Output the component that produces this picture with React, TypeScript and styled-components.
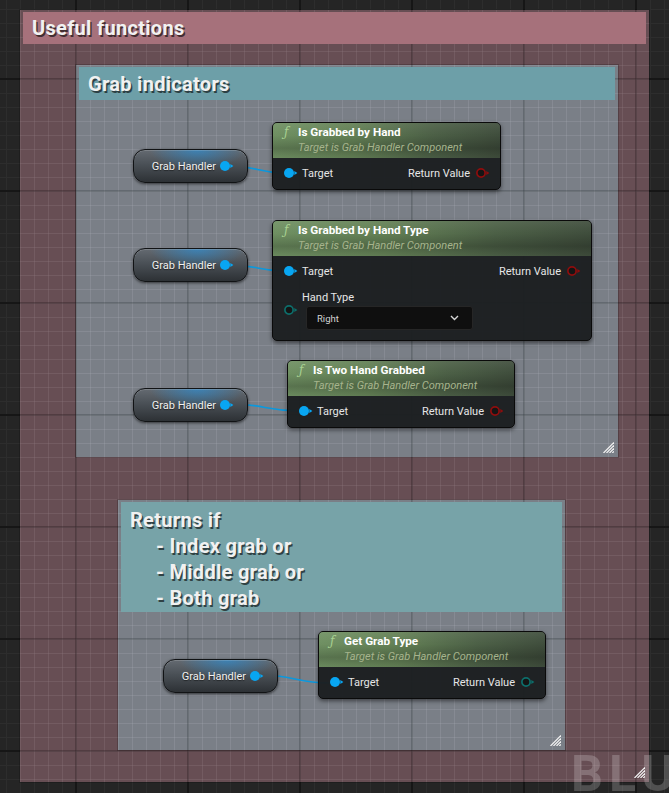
import React from "react";
import styled, { createGlobalStyle, css } from "styled-components";

const GlobalStyle = createGlobalStyle`
  html, body { margin: 0; padding: 0; background: #252525; }
  body { font-family: Roboto, "Noto Sans", sans-serif; }
`;

const gridLayer = (ox: number, oy: number, minor: string, major: string) => css`
  background-image:
    linear-gradient(to right, ${major} 2px, transparent 2px),
    linear-gradient(to bottom, ${major} 2px, transparent 2px),
    linear-gradient(to right, ${minor} 1.5px, transparent 1.5px),
    linear-gradient(to bottom, ${minor} 1.5px, transparent 1.5px);
  background-size: 112px 112px, 112px 112px, 14px 14px, 14px 14px;
  background-position: ${75 - ox}px 0, 0 ${78 - oy}px, ${6 - ox}px 0, 0 ${9 - oy}px;
`;

const Canvas = styled.div`
  position: relative;
  width: 669px;
  height: 793px;
  overflow: hidden;
  background-color: #252525;
  ${gridLayer(0, 0, "#2d2d2d", "#161616")}
`;

type Box = { $x: number; $y: number; $w: number; $h: number };

const Comment = styled.section<Box & { $tint: string; $minor: string; $major: string }>`
  position: absolute;
  left: ${(p) => p.$x}px;
  top: ${(p) => p.$y}px;
  width: ${(p) => p.$w}px;
  height: ${(p) => p.$h}px;
  box-sizing: border-box;
  padding: 2px 3px 0;
  display: flex;
  flex-direction: column;
  background-color: ${(p) => p.$tint};
  ${(p) => gridLayer(p.$x, p.$y, p.$minor, p.$major)}
  box-shadow: 0 0 0 1px rgba(0, 0, 0, 0.18);
`;

const CommentHeader = styled.div<{ $bg: string; $pad: string }>`
  background: ${(p) => p.$bg};
  color: #f1f1f1;
  font-family: Roboto, "Noto Sans", sans-serif;
  font-weight: 700;
  font-size: 20px;
  line-height: 26px;
  letter-spacing: 0.3px;
  padding: ${(p) => p.$pad};
  text-shadow: 1.5px 1.5px 0 rgba(0, 0, 0, 0.6);
  white-space: nowrap;
`;

const HeaderLine = styled.div<{ $indent?: boolean }>`
  padding-left: ${(p) => (p.$indent ? 26 : 0)}px;
`;

const Grip = styled.svg`
  position: absolute;
  right: 4px;
  bottom: 4px;
`;

const ResizeGrip = () => (
  <Grip width="11" height="11" viewBox="0 0 11 11">
    <g stroke="#f2f2f2" strokeWidth="1.2">
      <line x1="11" y1="0.5" x2="0.5" y2="11" />
      <line x1="11" y1="3.5" x2="3.5" y2="11" />
      <line x1="11" y1="6.5" x2="6.5" y2="11" />
      <line x1="11" y1="9.3" x2="9.3" y2="11" />
    </g>
  </Grip>
);

const Wires = styled.svg`
  position: absolute;
  left: 0;
  top: 0;
  pointer-events: none;
`;

const VarNode = styled.div<{ $x: number; $y: number }>`
  position: absolute;
  left: ${(p) => p.$x}px;
  top: ${(p) => p.$y}px;
  width: 115px;
  height: 34px;
  box-sizing: border-box;
  border-radius: 12px;
  border: 1px solid #111315;
  background:
    radial-gradient(ellipse 42% 60% at 56% 0%, rgba(30, 150, 235, 0.55), rgba(30, 150, 235, 0) 100%),
    linear-gradient(to bottom, #646a71 0%, #4a5056 45%, #2d3135 100%);
  box-shadow: 0 1px 3px rgba(0, 0, 0, 0.6), inset 0 1px 0 rgba(255, 255, 255, 0.16);
  display: flex;
  align-items: center;
  justify-content: flex-end;
  gap: 4px;
  padding-right: 13px;
  color: #f0f0f0;
  font-family: Roboto, "Noto Sans", sans-serif;
  font-size: 11px;
  text-shadow: 0 1px 1px rgba(0, 0, 0, 0.5);
`;

const FuncNode = styled.div<{ $x: number; $y: number; $w: number }>`
  position: absolute;
  left: ${(p) => p.$x}px;
  top: ${(p) => p.$y}px;
  width: ${(p) => p.$w}px;
  box-sizing: border-box;
  border: 1px solid #0a0a0a;
  border-radius: 5px;
  overflow: hidden;
  background: rgba(28, 31, 33, 0.97);
  box-shadow: 0 2px 4px rgba(0, 0, 0, 0.5);
  font-family: Roboto, "Noto Sans", sans-serif;
`;

const FuncHeader = styled.div`
  height: 35px;
  box-sizing: border-box;
  padding: 1px 8px 0 11px;
  background:
    linear-gradient(to bottom, rgba(255, 255, 255, 0.07), rgba(0, 0, 0, 0) 35%, rgba(0, 0, 0, 0.2) 72%, rgba(0, 0, 0, 0.04)),
    linear-gradient(to right, #6f9062 0%, #638055 35%, #4c6046 70%, #3f4d3c 100%);
`;

const TitleRow = styled.div`
  display: flex;
  align-items: center;
  height: 16px;
`;

const FIcon = styled.span`
  width: 14px;
  font-family: "DejaVu Serif", serif;
  font-style: italic;
  font-size: 12px;
  color: #a8d192;
`;

const Title = styled.span`
  font-weight: 700;
  font-size: 11.7px;
  line-height: 16px;
  color: #ffffff;
  white-space: nowrap;
`;

const Subtitle = styled.div`
  margin-left: 14px;
  font-style: italic;
  font-size: 11px;
  line-height: 16px;
  color: #a6b48d;
  white-space: nowrap;
`;

const FuncBody = styled.div`
  display: flex;
  flex-direction: column;
  gap: 9px;
  padding: 5px 10px 6px 11px;
`;

const PinRow = styled.div`
  display: flex;
  align-items: center;
  justify-content: space-between;
  height: 20px;
`;

const PinLabel = styled.span`
  display: flex;
  align-items: center;
  gap: 4px;
  color: #e6e6e6;
  font-size: 11px;
  white-space: nowrap;
`;

const OutLabel = styled(PinLabel)`
  gap: 6px;
`;

const InputGroup = styled.div`
  display: flex;
  align-items: center;
  gap: 4px;
  margin-bottom: 4px;
`;

const InputColumn = styled.div`
  display: flex;
  flex-direction: column;
`;

const InputName = styled.span`
  height: 16px;
  line-height: 16px;
  color: #e6e6e6;
  font-size: 11px;
`;

const Dropdown = styled.div`
  width: 167px;
  height: 24px;
  box-sizing: border-box;
  margin-left: 4px;
  display: flex;
  align-items: center;
  justify-content: space-between;
  padding: 0 13px 0 10px;
  background: #0f0f0f;
  border: 1px solid #262626;
  border-radius: 3px;
  color: #d2d2d2;
  font-size: 9.5px;
`;

const Watermark = styled.div`
  position: absolute;
  left: 571px;
  top: 749px;
  font-family: Roboto, "Noto Sans", sans-serif;
  font-weight: 700;
  font-size: 50px;
  line-height: 1;
  letter-spacing: 6px;
  color: rgba(255, 255, 255, 0.2);
  white-space: nowrap;
  pointer-events: none;
`;

const PinSvg = styled.svg`
  flex: none;
  display: block;
`;

const BLUE = "#08a6f2";
const RED = "#8e0d0d";
const TEAL = "#0d6e6b";

const DataPin = ({ color, hollow }: { color: string; hollow?: boolean }) => (
  <PinSvg width="14" height="12" viewBox="0 0 14 12">
    {hollow ? (
      <circle cx="5" cy="6" r="4.1" fill="#151515" stroke={color} strokeWidth="1.7" />
    ) : (
      <circle cx="5" cy="6" r="5" fill={color} />
    )}
    <path d="M10.3 3.9 L13.4 6 L10.3 8.1 Z" fill={color} />
  </PinSvg>
);

const Chevron = () => (
  <PinSvg width="9" height="6" viewBox="0 0 9 6">
    <path d="M1 1 L4.5 4.5 L8 1" fill="none" stroke="#d8d8d8" strokeWidth="1.4" />
  </PinSvg>
);

const GrabHandler = ({ x, y }: { x: number; y: number }) => (
  <VarNode $x={x} $y={y}>
    <span>Grab Handler</span>
    <DataPin color={BLUE} />
  </VarNode>
);

const Header = ({ title }: { title: string }) => (
  <FuncHeader>
    <TitleRow>
      <FIcon>ƒ</FIcon>
      <Title>{title}</Title>
    </TitleRow>
    <Subtitle>Target is Grab Handler Component</Subtitle>
  </FuncHeader>
);

const TargetRow = ({ outColor, outHollow = true }: { outColor: string; outHollow?: boolean }) => (
  <PinRow>
    <PinLabel>
      <DataPin color={BLUE} />
      Target
    </PinLabel>
    <OutLabel>
      Return Value
      <DataPin color={outColor} hollow={outHollow} />
    </OutLabel>
  </PinRow>
);

const wire = (x1: number, y1: number, x2: number, y2: number) => {
  const mx = (x1 + x2) / 2;
  return `M${x1} ${y1} C${mx} ${y1}, ${mx} ${y2}, ${x2} ${y2}`;
};

export default function App() {
  return (
    <>
      <GlobalStyle />
      <Canvas>
        <Comment
          $x={20}
          $y={10}
          $w={629}
          $h={772}
          $tint="rgba(170,120,132,0.5)"
          $minor="rgba(255,255,255,0.055)"
          $major="rgba(0,0,0,0.16)"
        >
          <CommentHeader $bg="#a6717b" $pad="3px 9px">
            Useful functions
          </CommentHeader>
          <ResizeGrip />
        </Comment>

        <Comment
          $x={76}
          $y={65}
          $w={542}
          $h={392}
          $tint="rgba(135,160,170,0.6)"
          $minor="rgba(255,255,255,0.05)"
          $major="rgba(0,0,0,0.12)"
        >
          <CommentHeader $bg="#6d9fa8" $pad="4px 9px 3px">
            Grab indicators
          </CommentHeader>
          <ResizeGrip />
        </Comment>

        <Comment
          $x={118}
          $y={500}
          $w={447}
          $h={250}
          $tint="rgba(135,160,170,0.6)"
          $minor="rgba(255,255,255,0.05)"
          $major="rgba(0,0,0,0.12)"
        >
          <CommentHeader $bg="#77a3a8" $pad="5px 9px 1px">
            <HeaderLine>Returns if</HeaderLine>
            <HeaderLine $indent>- Index grab or</HeaderLine>
            <HeaderLine $indent>- Middle grab or</HeaderLine>
            <HeaderLine $indent>- Both grab</HeaderLine>
          </CommentHeader>
          <ResizeGrip />
        </Comment>

        <Wires width="669" height="793" viewBox="0 0 669 793">
          <g fill="none" stroke="#0b98dd" strokeWidth="1.6">
            <path d={wire(230, 166, 285, 173)} />
            <path d={wire(230, 265, 285, 271)} />
            <path d={wire(230, 404, 300, 411)} />
            <path d={wire(260, 675, 330, 683)} />
          </g>
        </Wires>

        <GrabHandler x={133} y={149} />
        <GrabHandler x={133} y={248} />
        <GrabHandler x={133} y={388} />
        <GrabHandler x={163} y={659} />

        <FuncNode $x={272} $y={122} $w={229}>
          <Header title="Is Grabbed by Hand" />
          <FuncBody>
            <TargetRow outColor={RED} />
          </FuncBody>
        </FuncNode>

        <FuncNode $x={272} $y={220} $w={320}>
          <Header title="Is Grabbed by Hand Type" />
          <FuncBody>
            <TargetRow outColor={RED} />
            <InputGroup>
              <DataPin color={TEAL} hollow />
              <InputColumn>
                <InputName>Hand Type</InputName>
                <Dropdown>
                  <span>Right</span>
                  <Chevron />
                </Dropdown>
              </InputColumn>
            </InputGroup>
          </FuncBody>
        </FuncNode>

        <FuncNode $x={287} $y={360} $w={228}>
          <Header title="Is Two Hand Grabbed" />
          <FuncBody>
            <TargetRow outColor={RED} />
          </FuncBody>
        </FuncNode>

        <FuncNode $x={318} $y={631} $w={228}>
          <Header title="Get Grab Type" />
          <FuncBody>
            <TargetRow outColor={TEAL} />
          </FuncBody>
        </FuncNode>

        <Watermark>BLUEPRINT</Watermark>
      </Canvas>
    </>
  );
}
